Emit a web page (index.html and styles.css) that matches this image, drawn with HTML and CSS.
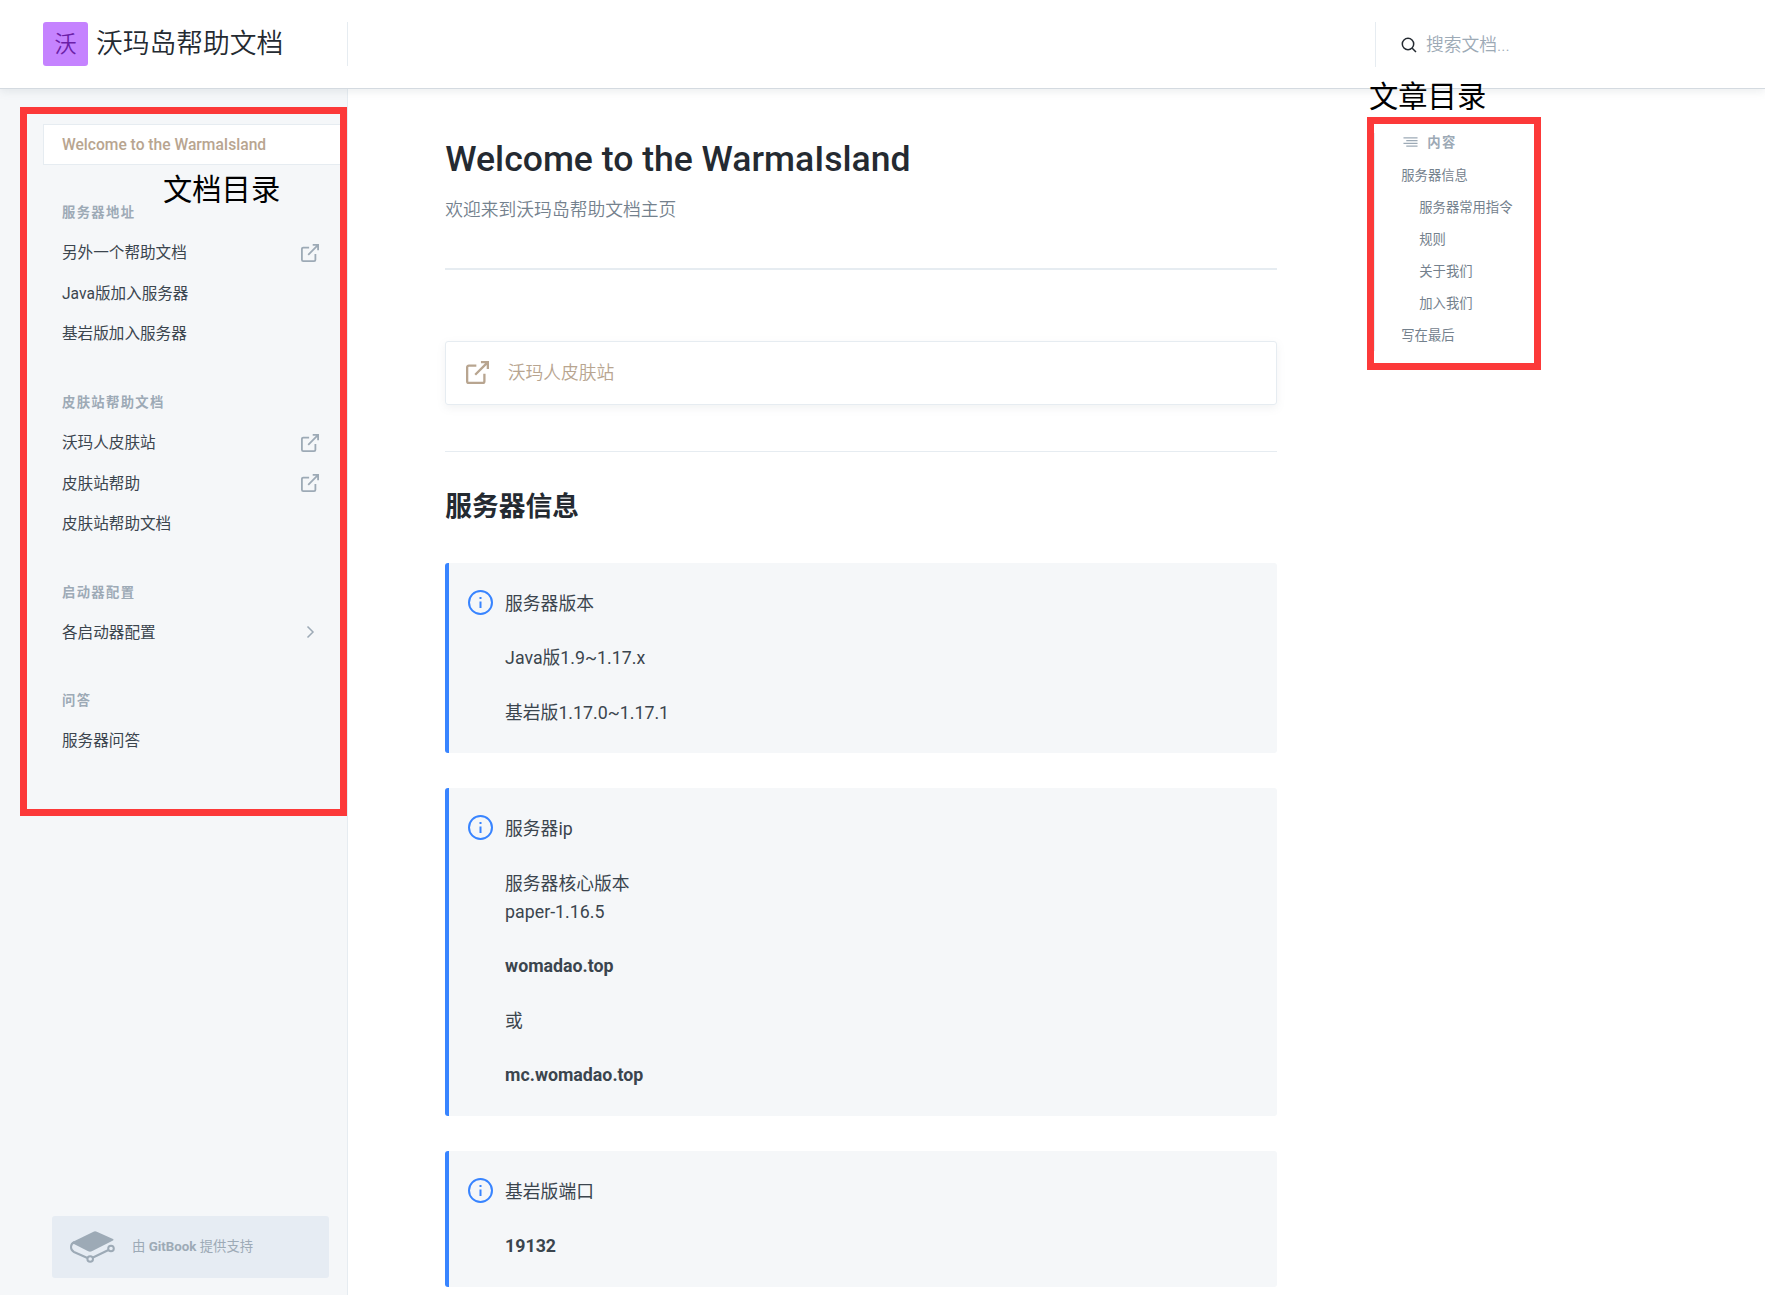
FILE: index.html
```html
<!DOCTYPE html>
<html lang="zh-CN">
<head>
<meta charset="utf-8">
<title>沃玛岛帮助文档</title>
<link rel="stylesheet" href="styles.css">
</head>
<body>
<svg class="defs" aria-hidden="true">
  <symbol id="external" viewBox="2 2 20 20"><path d="M18 13v6.500a1.500 1.500 0 0 1-1.500 1.500H4.500a1.500 1.500 0 0 1-1.500-1.500V7.500a1.500 1.500 0 0 1 1.500-1.500H11M15 3h6v6M10 14L21 3"/></symbol>
  <symbol id="info" viewBox="0 0 25 25"><circle cx="12.500" cy="12.500" r="11.500"/><path d="M12.500 11.500v6.500M12.500 7v2"/></symbol>
</svg>
<header class="header">
  <div class="brand"><span class="logo">沃</span><span class="brand-name">沃玛岛帮助文档</span></div>
  <div class="search">
    <svg class="search-icon" viewBox="0 0 16 16"><circle cx="7" cy="7" r="5.700"/><path d="M11.200 11.200L15 15"/></svg>
    <span class="search-text">搜索文档...</span>
  </div>
</header>
<div class="layout">
  <aside class="sidebar">
    <nav class="nav">
      <a class="item active">Welcome to the WarmaIsland</a>
      <section class="group">
        <h4 class="label">服务器地址</h4>
        <a class="item">另外一个帮助文档<svg class="ext"><use href="#external"/></svg></a>
        <a class="item">Java版加入服务器</a>
        <a class="item">基岩版加入服务器</a>
      </section>
      <section class="group">
        <h4 class="label">皮肤站帮助文档</h4>
        <a class="item">沃玛人皮肤站<svg class="ext"><use href="#external"/></svg></a>
        <a class="item">皮肤站帮助<svg class="ext"><use href="#external"/></svg></a>
        <a class="item">皮肤站帮助文档</a>
      </section>
      <section class="group">
        <h4 class="label">启动器配置</h4>
        <a class="item">各启动器配置<svg class="ext chevron" viewBox="0 0 18 18"><path d="M6.500 3.500l5.500 5.500l-5.500 5.500"/></svg></a>
      </section>
      <section class="group">
        <h4 class="label">问答</h4>
        <a class="item">服务器问答</a>
      </section>
    </nav>
    <div class="powered">
      <svg class="book" viewBox="0 0 45 32"><path class="cover" d="M23.500 .700Q25 0 26.800 .700L43 8Q44.300 8.800 43 9.500L21.800 20.300Q20 21.200 18.200 20.300L3.500 12.800Q1.500 11.500 4 10.200Z"/><path class="page" d="M4.500 11Q1 12.500 1 16Q1 19.500 4 21L17.500 27M23 26.500L38.500 19"/><circle class="page" cx="20.200" cy="28" r="2.800"/><circle class="page" cx="41" cy="17.500" r="2.800"/></svg>
      <span>由 <b>GitBook</b> 提供支持</span>
    </div>
  </aside>
  <main class="main">
    <h1>Welcome to the WarmaIsland</h1>
    <p class="subtitle">欢迎来到沃玛岛帮助文档主页</p>
    <a class="card"><svg class="card-icon"><use href="#external"/></svg>沃玛人皮肤站</a>
    <hr>
    <h2>服务器信息</h2>
    <div class="callout">
      <svg class="info"><use href="#info"/></svg>
      <div class="copy"><p>服务器版本</p><p>Java版1.9~1.17.x</p><p>基岩版1.17.0~1.17.1</p></div>
    </div>
    <div class="callout">
      <svg class="info"><use href="#info"/></svg>
      <div class="copy"><p>服务器ip</p><p>服务器核心版本<br>paper-1.16.5</p><p><b>womadao.top</b></p><p>或</p><p><b>mc.womadao.top</b></p></div>
    </div>
    <div class="callout">
      <svg class="info"><use href="#info"/></svg>
      <div class="copy"><p>基岩版端口</p><p><b>19132</b></p></div>
    </div>
  </main>
  <aside class="toc">
    <h4 class="label toc-label"><svg class="lines" viewBox="0 0 16 12"><path d="M.500 1.500h15M3.500 4.500h12M.500 7.500h15M3.500 10.500h12"/></svg>内容</h4>
    <a>服务器信息</a>
    <a class="sub">服务器常用指令</a>
    <a class="sub">规则</a>
    <a class="sub">关于我们</a>
    <a class="sub">加入我们</a>
    <a>写在最后</a>
  </aside>
</div>
<div class="mark mark-nav"></div>
<div class="note note-nav">文档目录</div>
<div class="mark mark-toc"></div>
<div class="note note-toc">文章目录</div>
</body>
</html>
```
FILE: styles.css
```css
* { box-sizing: border-box; margin: 0; padding: 0; }
body {
  position: relative;
  width: 1765px;
  height: 1295px;
  overflow: hidden;
  display: flex;
  flex-direction: column;
  background: #fff;
  color: #3b454e;
  font-family: Roboto, "Noto Sans CJK SC", sans-serif;
  font-size: 17.78px;
  line-height: 28px;
}
svg { fill: none; stroke: currentColor; stroke-width: 2; flex: none; }
.defs { position: absolute; width: 0; height: 0; }
b { font-weight: 700; }

.header {
  position: relative;
  z-index: 1;
  flex: none;
  display: flex;
  justify-content: space-between;
  height: 89px;
  padding: 22px 0;
  background: #fff;
  border-bottom: 1px solid #d4dae0;
  box-shadow: 0 3px 8px rgba(116, 129, 141, .13);
}
.brand {
  display: flex;
  align-items: center;
  width: 348px;
  height: 44px;
  padding-left: 43px;
  gap: 8px;
  border-right: 1px solid #e6ecf1;
}
.logo {
  width: 45px;
  height: 44px;
  border-radius: 3px;
  background: #c583ff;
  color: #6c1fa8;
  font-size: 22.2px;
  line-height: 44px;
  text-align: center;
  font-weight: 350;
}
.brand-name { color: #242a31; font-size: 26.75px; font-weight: 350; line-height: 42px; }
.search {
  display: flex;
  align-items: center;
  gap: 9px;
  width: 390px;
  height: 45px;
  padding-left: 25px;
  border-left: 1px solid #e6ecf1;
  color: #9daab6;
  font-weight: 350;
}
.search-icon { width: 16px; height: 16px; color: #242a31; stroke-width: 1.5; }
.search-text { padding-top: 1px; }

.layout { flex: 1; display: flex; min-height: 0; }
.sidebar {
  width: 348px;
  display: flex;
  flex-direction: column;
  justify-content: space-between;
  padding: 35px 0 17px 43px;
  background: #f5f7f9;
  border-right: 1px solid #e6ecf1;
}
.nav { display: flex; flex-direction: column; }
.item {
  display: flex;
  align-items: center;
  justify-content: space-between;
  height: 40.6px;
  padding: 0 28px 0 19px;
  font-size: 15.6px;
  font-weight: 400;
}
.item.active {
  height: 41px;
  background: #fff;
  border: 1px solid #e6ecf1;
  border-right: 0;
  padding-left: 18px;
  color: #b8a590;
  font-weight: 500;
}
.group { padding-top: 34px; }
.label {
  height: 27px;
  line-height: 27px;
  padding-left: 19px;
  margin-bottom: 7px;
  color: #9daab6;
  font-size: 13.33px;
  font-weight: 700;
  letter-spacing: 1.33px;
}
.ext { width: 18px; height: 18px; margin-bottom: 1px; color: #9daab6; }
.chevron { stroke-width: 1.5; }
.powered {
  display: flex;
  align-items: center;
  gap: 17px;
  width: 277px;
  height: 62px;
  margin-left: 9px;
  padding-left: 18px;
  border-radius: 3px;
  background: #e6ecf3;
  color: #9daab6;
  font-size: 13.33px;
}
.book { width: 45px; height: 32px; }
.cover { fill: currentColor; stroke: none; }

.main { width: 833px; margin-left: 97px; }
h1 { margin-top: 47px; padding-left: .5px; color: #242a31; font-size: 35.56px; font-weight: 500; line-height: 46px; }
.subtitle {
  height: 88px;
  padding: 14px 0 0 .5px;
  border-bottom: 2px solid #e6ecf1;
  color: #74818d;
  font-weight: 350;
}
.card {
  display: flex;
  align-items: center;
  gap: 19px;
  height: 64px;
  margin-top: 71px;
  padding-left: 20px;
  border: 1px solid #e6ecf1;
  border-radius: 3px;
  box-shadow: 0 3px 8px rgba(116, 129, 141, .1);
  color: #b8a590;
  font-weight: 350;
}
.card-icon { width: 23px; height: 23px; margin-bottom: 1px; }
hr { margin-top: 46px; border: 0; border-top: 1px solid #e6ecf1; }
h2 { margin: 36px 0 37px; padding-left: .5px; color: #242a31; font-size: 26.75px; line-height: 38px; }
.callout {
  display: flex;
  gap: 12.3px;
  margin-bottom: 35.3px;
  padding: 26.5px 19px;
  border-left: 4px solid #3884ff;
  border-radius: 3px;
  background: #f5f7f9;
}
.info { width: 25px; height: 25px; color: #3884ff; }
.copy { display: flex; flex-direction: column; gap: 26.6px; }

.toc {
  display: flex;
  flex-direction: column;
  width: 391px;
  height: 218px;
  margin: 44px 0 0 97px;
  padding-left: 26px;
  border-left: 1px solid #e6ecf1;
  color: #74818d;
  font-size: 13.33px;
  line-height: 32px;
}
.toc-label {
  display: flex;
  align-items: center;
  gap: 9px;
  height: 18px;
  padding-left: 2px;
  margin-bottom: 9px;
}
.lines { width: 15px; height: 12px; stroke-width: 1.3; }
.sub { padding-left: 18px; }

.mark { position: absolute; z-index: 2; border: 7px solid #fc3939; }
.mark-nav { left: 20px; top: 107px; width: 327px; height: 709px; }
.mark-toc { left: 1367px; top: 117px; width: 174px; height: 253px; }
.note { position: absolute; z-index: 3; color: #000; font-size: 29.3px; line-height: 40px; }
.note-nav { left: 163px; top: 170px; }
.note-toc { left: 1369px; top: 77px; }
```
